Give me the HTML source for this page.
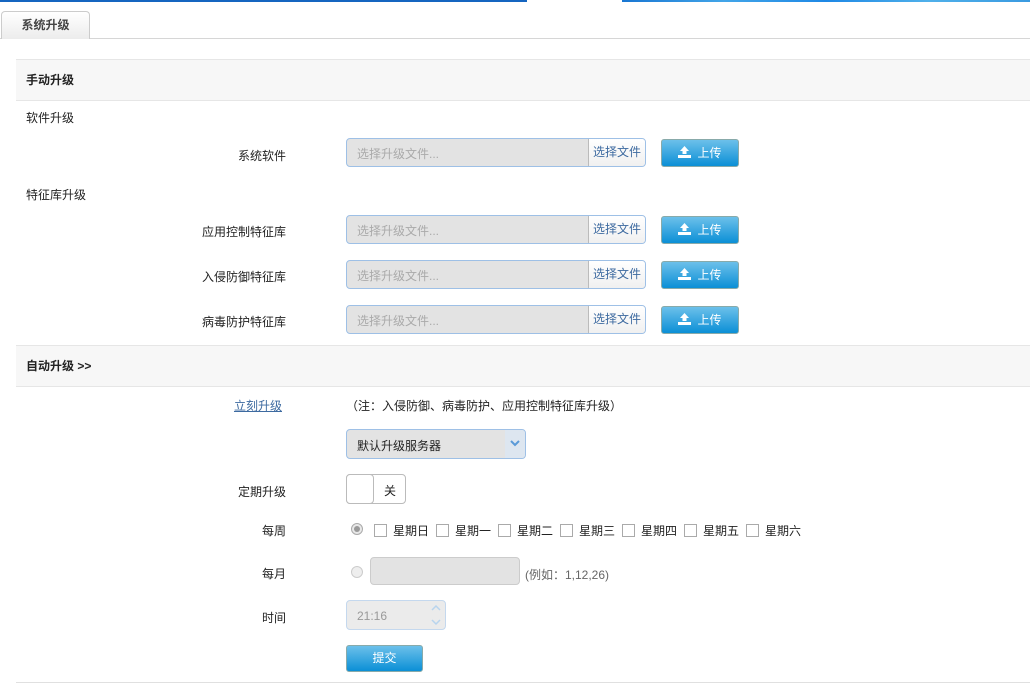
<!DOCTYPE html>
<html><head><meta charset="utf-8"><style>
*{margin:0;padding:0;box-sizing:border-box}
body{width:1030px;height:684px;position:relative;background:#fff;font-family:"Liberation Sans","Noto Sans CJK SC",sans-serif;font-size:12px;color:#222;overflow:hidden}
.a{position:absolute}
.lbl{position:absolute;right:744px;text-align:right;line-height:16px}
.inp{position:absolute;left:346px;width:300px;height:29px;border:1px solid #9ec0e6;border-radius:4px;background:#e3e3e3;overflow:hidden}
.inp span{position:absolute;left:10px;top:6px;color:#aaa}
.inp b{position:absolute;right:0;top:0;width:57px;height:27px;background:linear-gradient(#fff,#f0f0f0);border-left:1px solid #bbb;font-weight:normal;color:#3d6aa0;line-height:27px;text-align:center}
.up{position:absolute;left:661px;width:78px;height:28px;border-radius:3px;border:1px solid #8aa;background:linear-gradient(#6cc0ea,#0b8fd6);color:#fff;line-height:26px;text-align:center}
.up i{display:inline-block;vertical-align:middle;margin-right:6px}
.sec{position:absolute;left:16px;right:0;background:#f7f7f7;border-top:1px solid #e6e6e6;border-bottom:1px solid #e6e6e6;font-weight:bold;padding-left:10px}
.cb{display:inline-block;width:13px;height:13px;border:1px solid #aaa;background:#fff;vertical-align:-2px;margin-right:6px}
.wd{display:inline-block;width:62px;white-space:nowrap}
</style></head><body>
<div class="a" style="left:0;top:0;width:527px;height:2px;background:#1565c0"></div>
<div class="a" style="left:622px;top:0;width:408px;height:2px;background:linear-gradient(90deg,#1976d2,#42a5e8,#1e88e5,#4fb0ea,#3a9ae0)"></div>
<div class="a" style="left:0;top:38px;width:1030px;height:1px;background:#d6d6d6"></div>
<div class="a" style="left:1px;top:11px;width:89px;height:28px;border:1px solid #ccc;border-bottom:none;border-radius:4px 4px 0 0;background:linear-gradient(#fff,#ececec);text-align:center;line-height:27px;font-weight:bold;color:#444">系统升级</div>

<div class="sec" style="top:59px;height:42px;line-height:40px">手动升级</div>
<div class="a" style="left:26px;top:109px">软件升级</div>
<div class="lbl" style="top:148px">系统软件</div>
<div class="inp" style="top:138px"><span>选择升级文件...</span><b>选择文件</b></div>
<div class="up" style="top:139px"><i><svg width="13" height="12" viewBox="0 0 13 12"><path d="M6.5 0L11 5H8.5V8H4.5V5H2Z" fill="#fff"/><rect x="0" y="9" width="13" height="3" fill="#fff"/></svg></i>上传</div>
<div class="a" style="left:26px;top:186px">特征库升级</div>
<div class="lbl" style="top:224px">应用控制特征库</div>
<div class="inp" style="top:215px"><span>选择升级文件...</span><b>选择文件</b></div>
<div class="up" style="top:216px"><i><svg width="13" height="12" viewBox="0 0 13 12"><path d="M6.5 0L11 5H8.5V8H4.5V5H2Z" fill="#fff"/><rect x="0" y="9" width="13" height="3" fill="#fff"/></svg></i>上传</div>
<div class="lbl" style="top:269px">入侵防御特征库</div>
<div class="inp" style="top:260px"><span>选择升级文件...</span><b>选择文件</b></div>
<div class="up" style="top:261px"><i><svg width="13" height="12" viewBox="0 0 13 12"><path d="M6.5 0L11 5H8.5V8H4.5V5H2Z" fill="#fff"/><rect x="0" y="9" width="13" height="3" fill="#fff"/></svg></i>上传</div>
<div class="lbl" style="top:314px">病毒防护特征库</div>
<div class="inp" style="top:305px"><span>选择升级文件...</span><b>选择文件</b></div>
<div class="up" style="top:306px"><i><svg width="13" height="12" viewBox="0 0 13 12"><path d="M6.5 0L11 5H8.5V8H4.5V5H2Z" fill="#fff"/><rect x="0" y="9" width="13" height="3" fill="#fff"/></svg></i>上传</div>

<div class="sec" style="top:345px;height:42px;line-height:40px">自动升级 &gt;&gt;</div>
<div class="lbl" style="top:398px;right:748px;color:#3d6aa0;text-decoration:underline">立刻升级</div>
<div class="a" style="left:346px;top:397px">（注：入侵防御、病毒防护、应用控制特征库升级）</div>
<div class="a" style="left:346px;top:429px;width:180px;height:30px;border:1px solid #9ec0e6;border-radius:4px;background:#e3e3e3;overflow:hidden"><span class="a" style="left:10px;top:7px">默认升级服务器</span><div class="a" style="right:0;top:0;width:20px;height:28px;background:#dde6f0"><svg class="a" style="left:5px;top:10px" width="10" height="7"><path d="M1 1L5 5L9 1" stroke="#5a9ad8" stroke-width="2" fill="none"/></svg></div></div>
<div class="lbl" style="top:484px">定期升级</div>
<div class="a" style="left:346px;top:474px;width:60px;height:30px;border:1px solid #bbb;border-radius:4px;background:#fff"><div class="a" style="left:-1px;top:-1px;width:28px;height:30px;border:1px solid #bbb;border-radius:4px;background:#fff"></div><span class="a" style="left:37px;top:7px">关</span></div>
<div class="lbl" style="top:523px">每周</div>
<div class="a" style="left:351px;top:523px;width:12px;height:12px;border-radius:50%;border:1px solid #aaa;background:#e8e8e8"><div class="a" style="left:2px;top:2px;width:6px;height:6px;border-radius:50%;background:#999"></div></div>
<div class="a" style="left:374px;top:522px;white-space:nowrap"><span class="wd"><span class="cb"></span>星期日</span><span class="wd"><span class="cb"></span>星期一</span><span class="wd"><span class="cb"></span>星期二</span><span class="wd"><span class="cb"></span>星期三</span><span class="wd"><span class="cb"></span>星期四</span><span class="wd"><span class="cb"></span>星期五</span><span class="wd"><span class="cb"></span>星期六</span></div>
<div class="lbl" style="top:566px">每月</div>
<div class="a" style="left:351px;top:566px;width:12px;height:12px;border-radius:50%;border:1px solid #ccc;background:#eee"></div>
<div class="a" style="left:370px;top:557px;width:150px;height:28px;border:1px solid #ccc;border-radius:4px;background:#e3e3e3"></div>
<div class="a" style="left:525px;top:566px;color:#666">(例如：1,12,26)</div>
<div class="lbl" style="top:610px">时间</div>
<div class="a" style="left:346px;top:600px;width:100px;height:30px;border:1px solid #c4d8ee;border-radius:4px;background:#ebebeb"><span class="a" style="left:10px;top:8px;color:#999">21:16</span><svg class="a" style="right:4px;top:3px" width="10" height="22"><path d="M1 6L5 2L9 6M1 16L5 20L9 16" stroke="#b8d4ee" stroke-width="1.5" fill="none"/></svg></div>
<div class="a" style="left:346px;top:645px;width:77px;height:27px;border:1px solid #8aa;border-radius:3px;background:linear-gradient(#6cc0ea,#0b8fd6);color:#fff;text-align:center;line-height:25px">提交</div>
<div class="a" style="left:16px;top:682px;width:1014px;height:1px;background:#e0e0e0"></div>
</body></html>
